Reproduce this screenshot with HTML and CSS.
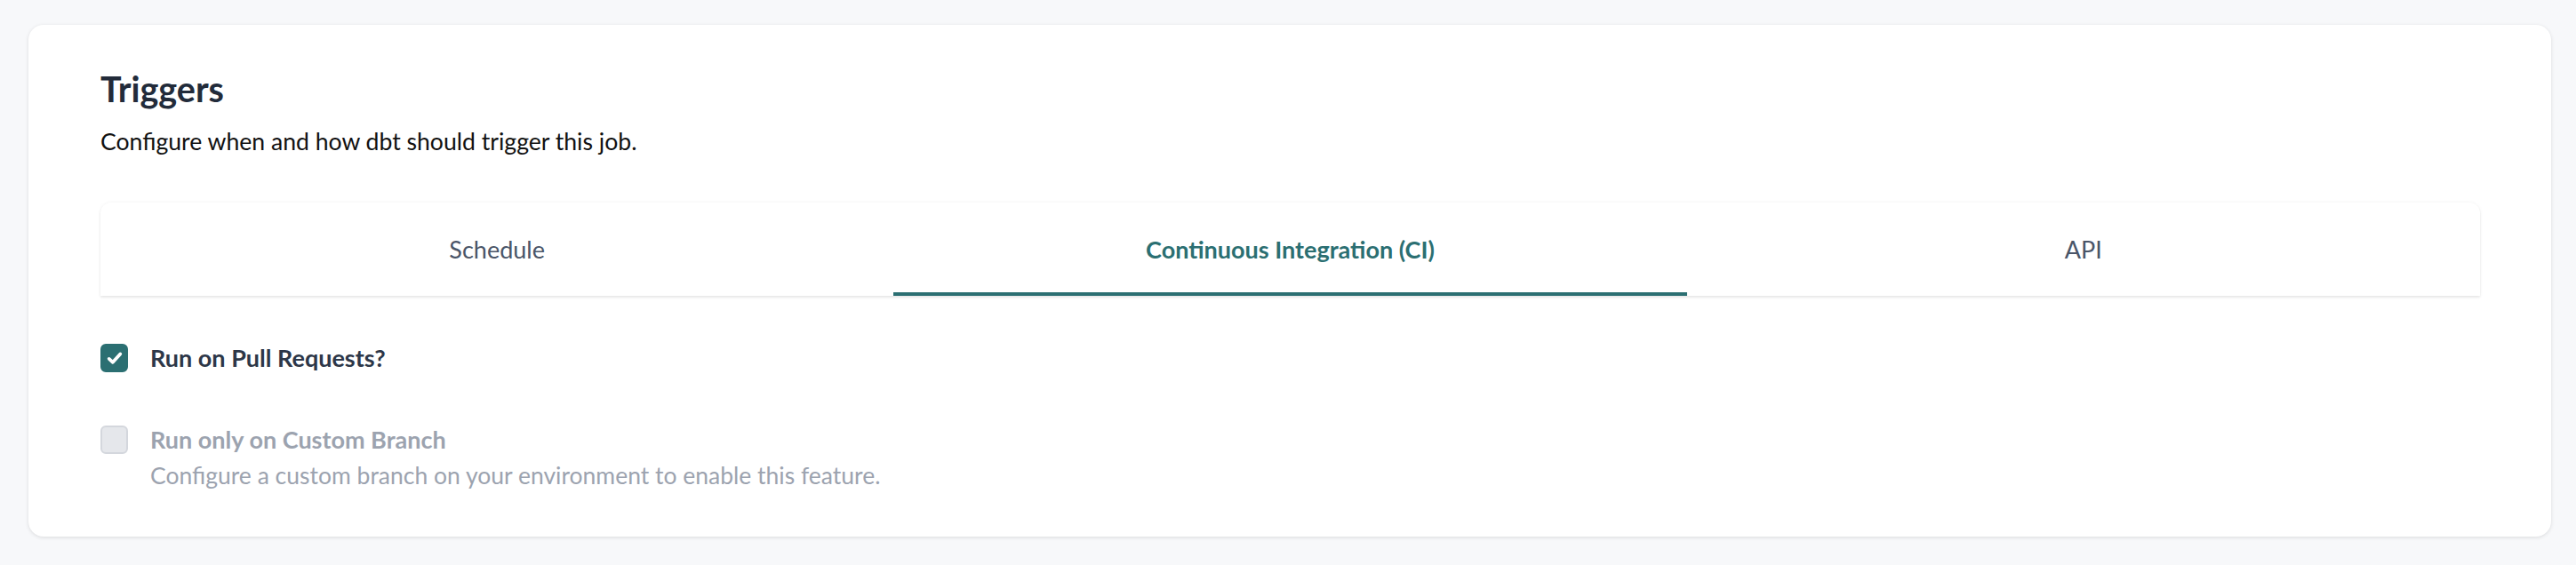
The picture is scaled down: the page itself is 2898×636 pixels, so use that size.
FILE: index.html
```html
<!DOCTYPE html>
<html>
<head>
<meta charset="utf-8">
<link rel="stylesheet" href="styles.css">
</head>
<body>
<div class="page">
  <section class="card">
    <h2 class="title">Triggers</h2>
    <p class="subtitle">Configure when and how dbt should trigger this job.</p>
    <nav class="tabs">
      <div class="tab">Schedule</div>
      <div class="tab active">Continuous Integration (CI)</div>
      <div class="tab">API</div>
    </nav>
    <div class="option">
      <span class="box checked">
        <svg viewBox="0 0 16 16" width="24" height="24"><path d="M3.8 8.6 L6.6 11.2 L12.2 5.0" fill="none" stroke="#fff" stroke-width="2.5" stroke-linecap="round" stroke-linejoin="round"/></svg>
      </span>
      <span class="label">Run on Pull Requests?</span>
    </div>
    <div class="option disabled">
      <span class="box"></span>
      <div class="text">
        <span class="label">Run only on Custom Branch</span>
        <span class="help">Configure a custom branch on your environment to enable this feature.</span>
      </div>
    </div>
  </section>
</div>
</body>
</html>
```
FILE: styles.css
```css
html, body {
  margin: 0;
  padding: 0;
  background: #f7f8fa;
}
body {
  font-family: "Lato", "Noto Sans", sans-serif;
}
.page {
  padding: 28px 28px 32px 32px;
}
.card {
  box-sizing: border-box;
  height: 576px;
  background: #fff;
  border-radius: 17px;
  box-shadow: 0 1px 4px rgba(0, 0, 0, 0.12);
  padding: 0 80px 0 81px;
  display: flex;
  flex-direction: column;
}
.title {
  margin: 37px 0 0;
  font-size: 39.5px;
  line-height: 70px;
  font-weight: 700;
  color: #222b3a;
}
.subtitle {
  margin: 6px 0 0;
  font-size: 26.6px;
  line-height: 36px;
  color: #111;
}
.tabs {
  margin-top: 51px;
  height: 105px;
  display: grid;
  grid-template-columns: 1fr 1fr 1fr;
  border-radius: 12px 12px 0 0;
  box-shadow: 0 0 4px rgba(0, 0, 0, 0.05), 0 2px 3px rgba(0, 0, 0, 0.08);
  background: #fff;
}
.tab {
  display: flex;
  align-items: center;
  justify-content: center;
  font-size: 27px;
  color: #4a5568;
  border-bottom: 4px solid transparent;
  padding-top: 4px;
}
.tab.active {
  color: #2b6f72;
  font-weight: 700;
  border-bottom-color: #2b6f72;
}
.option {
  display: flex;
  align-items: flex-start;
  gap: 25px;
  margin-top: 54px;
}
.option + .option {
  margin-top: 60px;
}
.box {
  box-sizing: border-box;
  width: 31px;
  height: 32px;
  border-radius: 6px;
  flex: none;
  background: #e5e7eb;
  border: 2px solid #d4d7dd;
  display: flex;
  align-items: center;
  justify-content: center;
}
.box.checked {
  background: #2b6f72;
  border-color: #2b6f72;
}
.label {
  font-size: 27px;
  line-height: 32px;
  font-weight: 700;
  color: #2d3748;
}
.text {
  display: flex;
  flex-direction: column;
}
.disabled .label {
  color: #9ca3af;
}
.help {
  margin-top: 3px;
  font-size: 26.5px;
  line-height: 42px;
  color: #9ca3af;
}
```
